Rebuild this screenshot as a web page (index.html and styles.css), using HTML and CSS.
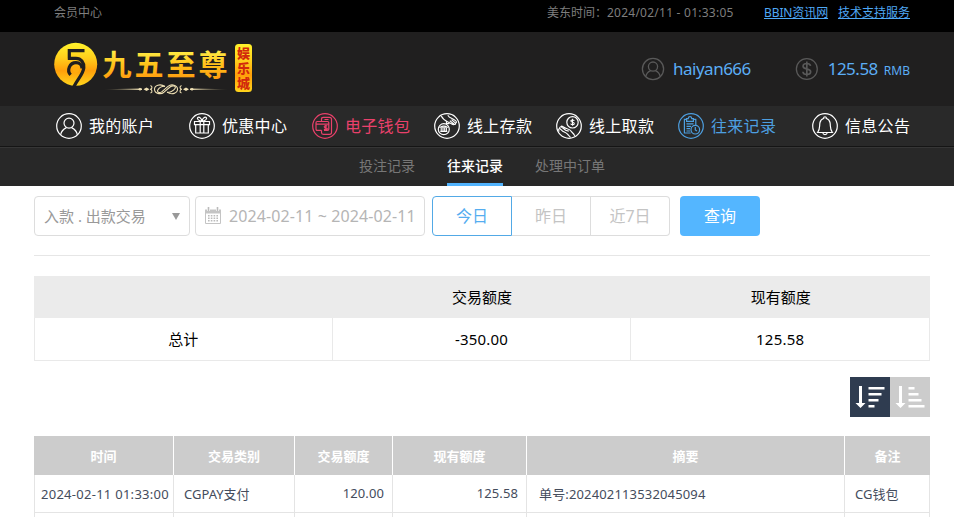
FILE: index.html
```
<!DOCTYPE html>
<html lang="zh-CN">
<head>
    <meta charset="UTF-8">
    <meta name="viewport" content="width=device-width, initial-scale=1.0">
    <title>会员中心</title>
    <link rel="stylesheet" href="styles.css">
</head>
<body>
    <div class="topbar">
        <span class="topbar-title">会员中心</span>
        <span class="topbar-time">美东时间：<span class="clock">2024/02/11 - 01:33:05</span></span>
        <a href="#" class="link-news">BBIN资讯网</a>
        <a href="#" class="link-tech">技术支持服务</a>
    </div>

    <div class="header">
        <svg class="logo" width="202" height="56" viewBox="52 40 202 56">
            <defs>
                <linearGradient id="gold" x1="0" y1="0" x2="0" y2="1">
                    <stop offset="0" stop-color="#fff32c"/>
                    <stop offset="0.35" stop-color="#ffcf1c"/>
                    <stop offset="0.65" stop-color="#ff9f0a"/>
                    <stop offset="1" stop-color="#ffd51c"/>
                </linearGradient>
                <linearGradient id="goldText" gradientUnits="userSpaceOnUse" x1="0" y1="50" x2="0" y2="79">
                    <stop offset="0" stop-color="#fff04a"/>
                    <stop offset="0.5" stop-color="#ffc21a"/>
                    <stop offset="1" stop-color="#ff9c10"/>
                </linearGradient>
                <linearGradient id="line" gradientUnits="userSpaceOnUse" x1="104" y1="0" x2="228" y2="0">
                    <stop offset="0" stop-color="#e9d7a0" stop-opacity="0.1"/>
                    <stop offset="0.3" stop-color="#efe0b4"/>
                    <stop offset="0.7" stop-color="#efe0b4"/>
                    <stop offset="1" stop-color="#e9d7a0" stop-opacity="0.1"/>
                </linearGradient>
            </defs>
            <circle cx="75.7" cy="64.3" r="21.5" fill="url(#gold)"/>
            <g fill="none" stroke="#201f1f" stroke-width="3.2">
                <path d="M84.5 50.6H69.3V58.5M67.8 58.3H76C81 58.3 84.2 62.5 83.8 67.8C83.3 74 77.5 79 74 86.5"/>
                <path d="M70.6 74.8C66.5 70.5 69.5 62.6 76 62.6C79.8 62.6 82 65.2 82 68.5"/>
            </g>
            <circle cx="76" cy="69.4" r="3.2" fill="#ffab0d"/>
            <text class="logo-name" x="102.5" y="75.5" fill="url(#goldText)">九五至尊</text>
            <path d="M104 89.3L142 88.5V90.1ZM190 88.5L228 89.3L190 90.1Z" fill="url(#line)"/>
            <g fill="none" stroke="#efe0b4" stroke-width="1.1">
                <path d="M165 86.5C160 83.2 154.5 85.5 154.5 89.3C154.5 93.5 160.5 95 164 92.2L170 87C173 84.8 176.5 86.2 175 88.5C173.5 91 169.5 92.5 167 92.3"/>
                <path d="M167 92.1C172 95.4 177.5 93.1 177.5 89.3C177.5 85.1 171.5 83.6 168 86.4L162 91.6C159 93.8 156.5 91.6 158 89.6C159.5 87.5 162.5 86.1 165 86.3"/>
                <path d="M150.5 85.5C153 86.5 152 89.3 150 89.3C152 89.3 153 92.1 150.5 93.1M181.5 85.5C179 86.5 180 89.3 182 89.3C180 89.3 179 92.1 181.5 93.1"/>
            </g>
            <path d="M138 89.3l2-1.5 2 1.5-2 1.5zM143.5 89.3l3-1.8 3 1.8-3 1.8zM183 89.3l3-1.8 3 1.8-3 1.8zM190 89.3l2-1.5 2 1.5-2 1.5z" fill="#efe0b4"/>
            <rect x="235" y="44" width="17" height="48" rx="3.5" fill="url(#gold)"/>
            <text class="logo-tag"><tspan x="243.5" y="58.2">娱</tspan><tspan x="243.5" y="73.3">乐</tspan><tspan x="243.5" y="88.2">城</tspan></text>
        </svg>
        <div class="user">
            <svg width="24" height="24" viewBox="0 0 24 24">
                <circle cx="12" cy="12" r="10.6"/>
                <circle cx="12" cy="9.6" r="4.6"/>
                <path d="M4.8 19.4C5.6 15.8 7.2 14.6 9.6 13.6M19.2 19.4C18.4 15.8 16.8 14.6 14.4 13.6"/>
            </svg>
            <span class="user-name">haiyan666</span>
        </div>
        <div class="balance">
            <svg width="24" height="24" viewBox="0 0 24 24">
                <circle cx="12" cy="12" r="10.6"/>
                <path d="M15.8 8.8C15.4 7 13.8 6.4 12 6.4C9.8 6.4 8.2 7.4 8.2 9.1C8.2 13 15.9 10.8 15.9 14.9C15.9 16.7 14.2 17.6 12 17.6C9.8 17.6 8.2 16.8 8 14.8M12 4.4V19.6" stroke-width="1.7"/>
            </svg>
            <span class="amount">125.58</span><span class="currency">RMB</span>
        </div>
    </div>

    <div class="nav">
        <a class="nav-item">
            <svg width="28" height="28" viewBox="0 0 28 28">
                <circle cx="14" cy="14" r="12.3"/>
                <circle cx="14" cy="11.1" r="5"/>
                <path d="M5.6 22.8C6.3 18.6 8.6 17 11.4 15.6M22.4 22.8C21.7 18.6 19.4 17 16.6 15.6"/>
            </svg>
            <span>我的账户</span>
        </a>
        <a class="nav-item">
            <svg width="28" height="28" viewBox="0 0 28 28">
                <circle cx="14" cy="14" r="12.3"/>
                <path d="M6.5 9.5H21.5V12.6H6.5ZM7.7 12.6V21H20.3V12.6M12.2 9.5V21M15.8 9.5V21M14 9.2C11 9.2 8.5 7 9.8 5.5C11.2 4.2 13.5 6.5 14 9.2C14.5 6.5 16.8 4.2 18.2 5.5C19.5 7 17 9.2 14 9.2"/>
            </svg>
            <span>优惠中心</span>
        </a>
        <a class="nav-item wallet">
            <svg width="28" height="28" viewBox="0 0 28 28">
                <circle cx="14" cy="14" r="12.3"/>
                <path d="M10.5 9.5V7.2Q10.5 5.3 12.3 5.3H18.5Q20.5 5.3 20.5 7.2V20.5Q20.5 22.3 18.5 22.3H12.3Q10.5 22.3 10.5 20.5V18.3M10.5 18.3H6.2Q5 18.3 5 17V10.8Q5 9.5 6.2 9.5H16.5Q17.8 9.5 17.8 10.8V17Q17.8 18.3 16.5 18.3H13M5 12.2H17.8M13.5 7.5H17.5M16.3 14.1C14.8 13.2 13 13.8 13.3 14.9C13.8 16 16.5 15.5 16.3 16.8C16 18 13.8 17.8 13 17M14.8 13V18.5"/>
            </svg>
            <span>电子钱包</span>
        </a>
        <a class="nav-item">
            <svg width="28" height="28" viewBox="0 0 28 28">
                <circle cx="14" cy="14" r="12.3"/>
                <circle cx="10.8" cy="17.2" r="5.5"/>
                <path d="M8.3 4C10.5 8.5 13.5 9.2 16 10.4C18.5 11.7 20.5 13.5 21.4 12.4L16.8 8.8M21.4 12.4C23 12.8 22.7 11.2 22 10.6L18.5 7.7M22.2 10.8C24 11.2 23.5 9.5 22.8 8.9C19.7 6.2 16.5 6.4 14.8 3.2M13.6 9.5L13.3 11.4L16.3 11.6M7.3 15.3Q10.8 12.8 14.3 15.3ZM8.2 16V18.8M10 16V18.8M11.7 16V18.8M13.4 16V18.8M7.3 19.4H14.3" stroke-width="1.1"/>
            </svg>
            <span>线上存款</span>
        </a>
        <a class="nav-item">
            <svg width="28" height="28" viewBox="0 0 28 28">
                <circle cx="14" cy="14" r="12.3"/>
                <circle cx="17.5" cy="10.3" r="5.7"/>
                <path d="M19.3 8.8C18.9 7.7 15.8 7.5 15.9 9C16 10.7 19.4 9.7 19.3 11.6C19.1 13.1 16 12.9 15.7 11.7M17.5 6.8V13.8M4.2 19.6C2.7 16.7 4.2 15.8 6 17.6M4.7 16.6C4.2 14.8 5.8 14.2 7 15.4L10.7 18.2M6 14.8C6.4 13.7 7.8 14.2 8.5 15C10.5 17 14 16.5 15.5 18.5C16.7 20.4 18.7 21.3 19.8 23.9M6 17.6C9 20.9 10.5 19.8 12.5 22.2C13.5 23.5 14.5 24 15.5 25.5M10.3 18.2L13.8 19.1" stroke-width="1.1"/>
            </svg>
            <span>线上取款</span>
        </a>
        <a class="nav-item active">
            <svg width="28" height="28" viewBox="0 0 28 28">
                <circle cx="14" cy="14" r="12.3"/>
                <circle cx="18.3" cy="17.7" r="4.3"/>
                <path d="M13.7 21H7.4V7.4H9.6M16.4 7.4H18.8V13M9.6 6.6H11.2Q11.4 4.7 13 4.7Q14.6 4.7 14.8 6.6H16.4V9.4H9.6ZM9.5 11.8H16.5M9.5 14.3H14M9.5 16.7H13M9.5 19H13M18.3 15V18L20 19"/>
            </svg>
            <span>往来记录</span>
        </a>
        <a class="nav-item">
            <svg width="28" height="28" viewBox="0 0 28 28">
                <circle cx="14" cy="14" r="12.3"/>
                <path d="M6.6 20.5C9.5 16.5 8.2 14 9 10.5C9.6 7.9 11.3 6.8 12.7 6.5C12.4 4.2 15.6 4.2 15.3 6.5C16.7 6.8 18.4 7.9 19 10.5C19.8 14 18.5 16.5 21.4 20.5ZM11.8 20.7C12.1 23.2 15.9 23.2 16.2 20.7"/>
            </svg>
            <span>信息公告</span>
        </a>
    </div>

    <div class="subnav">
        <a>投注记录</a>
        <a class="active">往来记录</a>
        <a>处理中订单</a>
    </div>

    <div class="main">
        <div class="filters">
            <div class="select"><span>入款 . 出款交易</span><i class="arrow"></i></div>
            <div class="date-range">
                <svg width="18" height="18" viewBox="0 0 18 18">
                    <path d="M1 2.5H17V6.5H1Z" fill="#c4c4c4"/>
                    <path d="M1.5 6V16.5H16.5V6" fill="none" stroke="#c4c4c4"/>
                    <path d="M4.5 0.5V4M13.5 0.5V4" stroke="#fff" stroke-width="3"/>
                    <path d="M4.5 0V4M13.5 0V4" stroke="#bbb" stroke-width="1.6"/>
                    <path d="M4 8.7H14M4 11.2H14M4 13.7H14" stroke="#bbb" stroke-width="1.5" stroke-dasharray="1.6 1.2"/>
                </svg>
                <span>2024-02-11 ~ 2024-02-11</span>
            </div>
            <div class="days">
                <button class="active">今日</button>
                <button>昨日</button>
                <button>近7日</button>
            </div>
            <button class="query">查询</button>
        </div>

        <table class="summary">
            <tr><th></th><th>交易额度</th><th>现有额度</th></tr>
            <tr><td>总计</td><td class="num">-350.00</td><td class="num">125.58</td></tr>
        </table>

        <div class="sort">
            <button class="active">
                <svg width="40" height="40" viewBox="0 0 40 40">
                    <path d="M9 9h3v17h3.5L10.5 31L5.5 26H9z"/>
                    <path d="M18.5 10h16v2.5h-16zM18.5 16h13v2.5h-13zM18.5 22h10v2.5h-10zM18.5 28h6v2.5h-6z"/>
                </svg>
            </button>
            <button>
                <svg width="40" height="40" viewBox="0 0 40 40">
                    <path d="M9 9h3v17h3.5L10.5 31L5.5 26H9z"/>
                    <path d="M18.5 10h6v2.5h-6zM18.5 16h10v2.5h-10zM18.5 22h13v2.5h-13zM18.5 28h16v2.5h-16z"/>
                </svg>
            </button>
        </div>

        <table class="records">
            <colgroup>
                <col class="c-time"><col class="c-type"><col class="c-amount"><col class="c-balance"><col class="c-summary"><col class="c-note">
            </colgroup>
            <tr>
                <th>时间</th><th>交易类别</th><th>交易额度</th><th>现有额度</th><th>摘要</th><th>备注</th>
            </tr>
            <tr>
                <td class="time">2024-02-11 01:33:00</td>
                <td>CGPAY支付</td>
                <td class="right">120.00</td>
                <td class="right">125.58</td>
                <td class="desc">单号:202402113532045094</td>
                <td>CG钱包</td>
            </tr>
            <tr class="next"><td></td><td></td><td></td><td></td><td></td><td></td></tr>
        </table>
    </div>
</body>
</html>
```
FILE: styles.css
```
* {
    box-sizing: border-box;
}
body {
    margin: 0;
    background: #fff;
    font-family: "Noto Sans", "Noto Sans CJK SC", sans-serif;
    font-size: 14px;
}
button {
    font-family: inherit;
    padding: 0;
    cursor: pointer;
}
.topbar {
    display: flex;
    height: 32px;
    padding: 0 44px 0 54px;
    background: #000;
    color: #7e7e7e;
    font-size: 12px;
    line-height: 26px;
    white-space: nowrap;
}
.topbar-title {
    flex: 1;
}
.topbar-time {
    width: 217px;
}
.clock {
    letter-spacing: 0.24px;
}
.topbar a {
    color: #4fa9f5;
}
.link-news {
    width: 74px;
    letter-spacing: -0.1px;
}
.header {
    display: flex;
    height: 74px;
    padding: 0 44px 0 52px;
    background: #201f1f;
    color: #5badf5;
}
.logo {
    margin-top: 8px;
}
.logo-name {
    font-family: "Noto Sans CJK SC", sans-serif;
    font-weight: 700;
    font-size: 29px;
    letter-spacing: 3px;
}
.logo-tag {
    font-family: "Noto Sans CJK SC", sans-serif;
    font-weight: 900;
    font-size: 13px;
    text-anchor: middle;
    fill: #d22a0c;
}
.user, .balance {
    display: flex;
    align-items: center;
    white-space: nowrap;
}
.user svg, .balance svg {
    fill: none;
    stroke: #595959;
    stroke-width: 1.3;
}
.user {
    margin-left: auto;
    width: 154px;
}
.user-name {
    margin: -2px 0 0 8px;
    font-size: 17px;
    letter-spacing: -0.5px;
}
.balance {
    width: 115px;
}
.amount {
    margin: -2px 0 0 9px;
    font-size: 17px;
    letter-spacing: -0.5px;
}
.currency {
    margin: 3px 0 0 6px;
    font-size: 12px;
}
.nav {
    display: grid;
    grid-template-columns: 133px 123px 122px 122px 122px 134px 100px;
    height: 41px;
    padding-left: 55px;
    background: #292929;
    border-bottom: 1px solid #151515;
}
.nav-item {
    display: flex;
    align-items: center;
    color: #fff;
    font-size: 16px;
    letter-spacing: 0.3px;
    white-space: nowrap;
}
.nav-item span {
    margin-top: -2px;
}
.nav-item svg {
    margin-right: 6px;
    fill: none;
    stroke: currentColor;
    stroke-width: 1.2;
}
.nav-item.wallet {
    color: #ea416b;
}
.nav-item.active {
    color: #4d9fe0;
}
.subnav {
    display: flex;
    justify-content: center;
    gap: 32px;
    height: 39px;
    padding-left: 10px;
    background: #282828;
    border-top: 1px solid #363636;
    color: #777;
    line-height: 35px;
}
.subnav .active {
    color: #fff;
    font-weight: 500;
    border-bottom: 3px solid #51b3fd;
}
.main {
    padding: 10px 24px 0 34px;
}
.filters {
    display: flex;
    height: 60px;
    border-bottom: 1px solid #e6e6e6;
}
.select, .date-range {
    display: flex;
    align-items: center;
    height: 40px;
    border: 1px solid #ddd;
    border-radius: 4px;
    white-space: nowrap;
}
.select {
    justify-content: space-between;
    width: 156px;
    margin-right: 5px;
    padding: 0 9px;
    color: #999;
    font-size: 15px;
}
.select span {
    margin-top: -2px;
}
.arrow {
    border: 4px solid transparent;
    border-top: 7px solid #999;
    border-bottom: 0;
}
.date-range {
    width: 230px;
    margin-right: 7px;
    padding-left: 8px;
    color: #b5b5b5;
    font-size: 16px;
}
.date-range span {
    margin-left: 7px;
    letter-spacing: 0.1px;
}
.days {
    display: flex;
    width: 238px;
    height: 40px;
    margin-right: 10px;
}
.days button {
    flex: 1;
    padding-bottom: 2px;
    border: 1px solid #ddd;
    border-left: 0;
    background: #fff;
    color: #c4c4c4;
    font-size: 16px;
}
.days button:last-child {
    border-radius: 0 4px 4px 0;
}
.days .active {
    border: 1px solid #52a9e6;
    border-radius: 4px 0 0 4px;
    color: #55adf0;
}
.query {
    width: 80px;
    height: 40px;
    padding-bottom: 2px;
    border: 0;
    border-radius: 4px;
    background: #54b6ff;
    color: #fff;
    font-size: 16px;
}
table {
    width: 896px;
    border-collapse: separate;
    border-spacing: 0;
    table-layout: fixed;
}
.summary {
    margin-top: 20px;
    font-size: 15px;
    text-align: center;
}
.summary th {
    height: 42px;
    padding: 0 0 2px;
    background: #ebebeb;
    font-weight: normal;
}
.summary td {
    height: 43px;
    padding: 0;
    border-right: 1px solid #e9e9e9;
    border-bottom: 1px solid #e9e9e9;
}
.summary td:first-child {
    padding-bottom: 2px;
    border-left: 1px solid #e9e9e9;
}
.summary .num {
    letter-spacing: 0.2px;
}
.sort {
    display: flex;
    justify-content: flex-end;
    margin: 16px 0 19px;
}
.sort button {
    width: 40px;
    height: 40px;
    border: 0;
    background: #ccc;
}
.sort .active {
    background: #2f3c50;
}
.sort svg {
    display: block;
    fill: #fff;
}
.records {
    color: #444c5c;
    font-size: 13px;
    white-space: nowrap;
}
.c-time { width: 140px; }
.c-type { width: 121px; }
.c-amount { width: 98px; }
.c-balance { width: 134px; }
.c-summary { width: 318px; }
.c-note { width: 85px; }
.records th {
    height: 39px;
    padding: 0;
    background: #ccc;
    border-right: 1px solid #fff;
    color: #fff;
}
.records th:last-child {
    border-right: 0;
}
.records td {
    height: 38px;
    padding: 0 8px 1px 10px;
    border-right: 1px solid #e4e4e4;
    border-bottom: 1px solid #e4e4e4;
}
.records td:first-child {
    padding: 0 0 0 6px;
    border-left: 1px solid #e4e4e4;
}
.records .time {
    letter-spacing: 0.27px;
}
.records .right {
    text-align: right;
    letter-spacing: 0.1px;
}
.records .desc {
    padding-left: 12px;
    letter-spacing: 0.15px;
}
.records .next td {
    height: 4px;
    padding: 0;
    border-bottom: 0;
}
```
